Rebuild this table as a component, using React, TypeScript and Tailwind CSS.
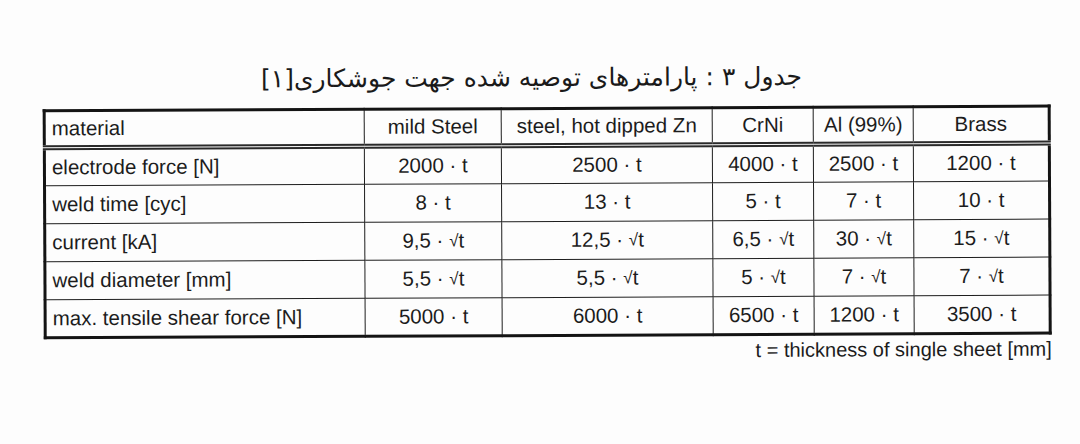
import React from "react";

const headers = ["mild Steel", "steel, hot dipped Zn", "CrNi", "Al (99%)", "Brass"];

const rows: { label: string; values: string[] }[] = [
  { label: "electrode force [N]", values: ["2000 · t", "2500 · t", "4000 · t", "2500 · t", "1200 · t"] },
  { label: "weld time [cyc]", values: ["8 · t", "13 · t", "5 · t", "7 · t", "10 · t"] },
  { label: "current [kA]", values: ["9,5 · √t", "12,5 · √t", "6,5 · √t", "30 · √t", "15 · √t"] },
  { label: "weld diameter [mm]", values: ["5,5 · √t", "5,5 · √t", "5 · √t", "7 · √t", "7 · √t"] },
  { label: "max. tensile shear force [N]", values: ["5000 · t", "6000 · t", "6500 · t", "1200 · t", "3500 · t"] },
];

const widths = ["w-[320px]", "w-[137px]", "w-[211px]", "w-[101px]", "w-[100px]", "w-[136px]"];

function Val({ v }: { v: string }) {
  const parts = v.split("√");
  if (parts.length === 1) return <>{v}</>;
  return (
    <>
      {parts[0]}
      <span className="text-[17px] align-[1px]">√</span>
      {parts[1]}
    </>
  );
}

export default function App() {
  return (
    <div className="w-[1080px] h-[444px] bg-[#fdfdfd] overflow-hidden font-['Liberation_Sans',Arial,sans-serif] text-[#1c1c1c]">
      <div className="rotate-[-0.27deg] origin-center pt-[60px]">
        <div
          dir="rtl"
          className="pr-[16px] text-center text-[25px] leading-[36px] h-[44px] font-['DejaVu_Sans','Noto_Sans',sans-serif] text-[#1a1a1a]"
        >
          جدول ۳ : پارامترهای توصیه شده جهت جوشکاری[۱]
        </div>
        <div className="pl-[43px] pt-[3px]">
          <table className="border-collapse border-[3px] border-[#141414] text-[20.5px] leading-none">
            <colgroup>
              {widths.map((w, i) => (
                <col key={i} className={w} />
              ))}
            </colgroup>
            <thead>
              <tr className="h-[37px]">
                <th className="border-[1.5px] border-[#1e1e1e] border-b-[5px] border-b-[#2a2a2a] border-double text-left font-normal pl-[6px]">
                  material
                </th>
                {headers.map((h) => (
                  <th
                    key={h}
                    className="border-[1.5px] border-[#1e1e1e] border-b-[5px] border-b-[#2a2a2a] border-double font-normal text-center"
                  >
                    {h}
                  </th>
                ))}
              </tr>
            </thead>
            <tbody>
              {rows.map((r) => (
                <tr key={r.label} className="h-[38px]">
                  <td className="border-[1.5px] border-[#1e1e1e] text-left pl-[6px]">{r.label}</td>
                  {r.values.map((v, i) => (
                    <td key={i} className="border-[1.5px] border-[#1e1e1e] text-center">
                      <Val v={v} />
                    </td>
                  ))}
                </tr>
              ))}
            </tbody>
          </table>
          <div className="w-[1008px] text-right text-[20px] leading-[24px] pt-[2px]">
            t = thickness of single sheet [mm]
          </div>
        </div>
      </div>
    </div>
  );
}
